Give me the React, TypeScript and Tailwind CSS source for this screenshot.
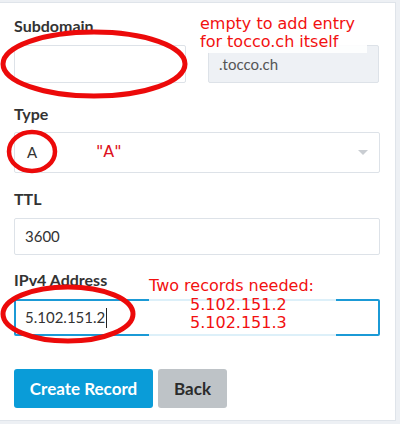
import React from "react";

const lato = { fontFamily: "Lato, 'Liberation Sans', sans-serif" };
const dejavu = { fontFamily: "'DejaVu Sans', sans-serif" };

function Label({ children, className = "" }: { children?: React.ReactNode; className?: string }) {
  return (
    <label className={`block h-[20px] text-[16px] leading-[20px] font-bold text-[#333] ${className}`}>
      {children}
    </label>
  );
}

export default function App() {
  return (
    <div className="relative w-[400px] h-[424px] overflow-hidden bg-[#edf0f4]" style={lato}>
      <div className="relative mt-[2px] w-[396px] h-[419px] bg-white border-t border-r border-b border-[#dfe4ea] pl-[14px] pr-[15px] pt-[13px]">
        {/* Subdomain + domain addon */}
        <div className="grid grid-cols-[172px_171px] gap-x-[22px]">
          <Label>Subdomain</Label>
          <Label />
          <input
            className="mt-[9px] h-[38px] rounded-[2px] border border-[#dde2e8] bg-white px-[10px] text-[15px] outline-none"
            defaultValue=""
          />
          <div className="mt-[9px] h-[38px] rounded-[2px] border border-[#dde2e8] bg-[#eef1f5] px-[10px] text-[15px] leading-[36px] text-[#555]">
            .tocco.ch
          </div>
        </div>

        {/* Type */}
        <Label className="mt-[21px]">Type</Label>
        <div className="mt-[8px] h-[41px] flex items-center justify-between rounded-[2px] border border-[#dde2e8] pl-[12px] pr-[11px] text-[15px] text-[#333]">
          <span>A</span>
          <span className="w-0 h-0 border-l-[5px] border-r-[5px] border-t-[5px] border-l-transparent border-r-transparent border-t-[#c9cdd2]" />
        </div>

        {/* TTL */}
        <Label className="mt-[16px]">TTL</Label>
        <div className="mt-[9px] h-[37px] rounded-[2px] border border-[#dde2e8] px-[10px] text-[15px] leading-[35px] text-[#333]">
          3600
        </div>

        {/* IPv4 */}
        <Label className="mt-[15px]">IPv4 Address</Label>
        <div className="mt-[9px] h-[37px] flex items-center rounded-[2px] border-2 border-[#1b9ad6] px-[9px] text-[15px] text-[#333]">
          <span>5.102.151.2</span>
          <span className="ml-px w-px h-[20px] bg-[#222]" />
        </div>

        {/* Buttons */}
        <div className="mt-[33px] flex gap-[5px]">
          <button className="h-[39px] w-[139px] rounded-[3px] bg-[#0a9cd8] text-[17px] font-bold text-white">
            Create Record
          </button>
          <button className="h-[39px] w-[69px] rounded-[3px] bg-[#bec3c7] text-[17px] font-bold text-[#2b2b2b]">
            Back
          </button>
        </div>
      </div>

      {/* Annotation notes */}
      <div
        className="absolute left-[197px] top-[15px] w-[170px] h-[38px] bg-white/90 pl-[3px] text-[16px] leading-[18px] text-[#f21010]"
        style={dejavu}
      >
        <div>empty to add entry</div>
        <div>for tocco.ch itself</div>
      </div>
      <div className="absolute left-[96px] top-[143px] text-[16px] leading-[18px] text-[#dd1020]" style={dejavu}>
        "A"
      </div>
      <div
        className="absolute left-[149px] top-[277px] w-[187px] h-[62px] bg-white/85 text-[16px] leading-[18.5px] text-[#f21010]"
        style={dejavu}
      >
        <div>Two records needed:</div>
        <div className="pl-[41px]">5.102.151.2</div>
        <div className="pl-[41px]">5.102.151.3</div>
      </div>

      {/* Red ellipses */}
      <svg className="absolute left-0 top-0 pointer-events-none" width="400" height="424">
        <ellipse cx="94" cy="64" rx="91" ry="32" fill="none" stroke="#ec0a0a" strokeWidth="5" />
        <ellipse cx="32" cy="151.5" rx="23" ry="19.5" fill="none" stroke="#ec0a0a" strokeWidth="4.5" />
        <ellipse cx="68" cy="314" rx="65" ry="27" fill="none" stroke="#ec0a0a" strokeWidth="5" />
      </svg>
    </div>
  );
}
